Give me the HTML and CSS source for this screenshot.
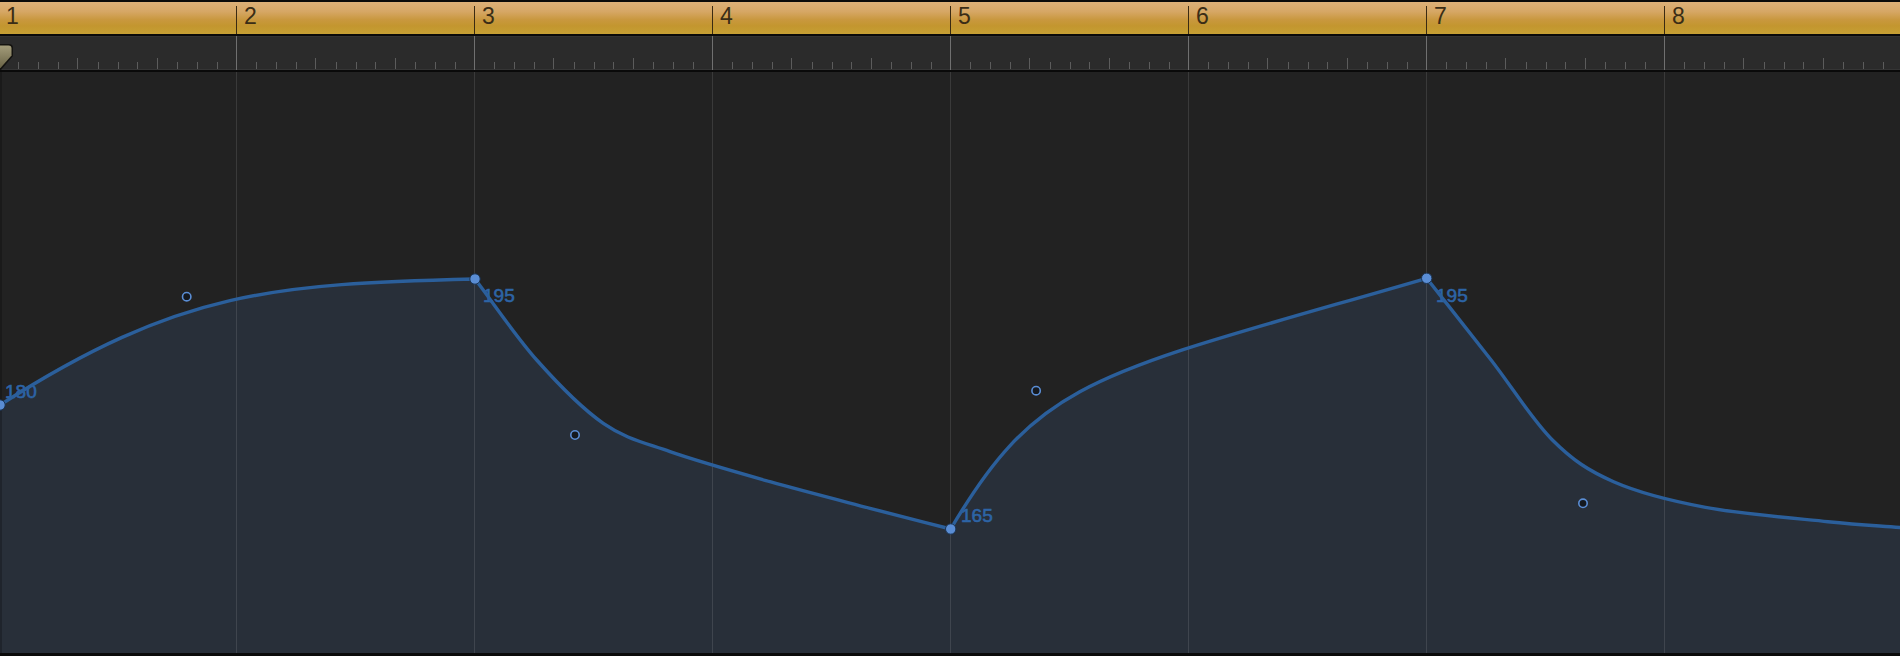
FILE: index.html
```html
<!DOCTYPE html>
<html>
<head>
<meta charset="utf-8">
<link rel="stylesheet" href="styles.css">
</head>
<body>
<div class="timeline">
  <div class="bars">
    <div class="bar">1</div>
    <div class="bar">2</div>
    <div class="bar">3</div>
    <div class="bar">4</div>
    <div class="bar">5</div>
    <div class="bar">6</div>
    <div class="bar">7</div>
    <div class="bar">8</div>
    <div class="bar"></div>
  </div>
  <div class="ruler">
    <svg class="ruler-svg" width="1900" height="34" viewBox="0 0 1900 34">
      <defs>
        <pattern id="ticks" x="-2" y="0" width="238" height="34" patternUnits="userSpaceOnUse">
          <rect x="0" y="0" width="1" height="34" fill="#707070"/>
          <rect x="20" y="26" width="1" height="7" fill="#5c5c5c"/>
          <rect x="40" y="26" width="1" height="7" fill="#5c5c5c"/>
          <rect x="60" y="26" width="1" height="7" fill="#5c5c5c"/>
          <rect x="79" y="22" width="1" height="11" fill="#5c5c5c"/>
          <rect x="100" y="26" width="1" height="7" fill="#5c5c5c"/>
          <rect x="120" y="26" width="1" height="7" fill="#5c5c5c"/>
          <rect x="139" y="26" width="1" height="7" fill="#5c5c5c"/>
          <rect x="159" y="22" width="1" height="11" fill="#5c5c5c"/>
          <rect x="179" y="26" width="1" height="7" fill="#5c5c5c"/>
          <rect x="199" y="26" width="1" height="7" fill="#5c5c5c"/>
          <rect x="219" y="26" width="1" height="7" fill="#5c5c5c"/>
        </pattern>
        <linearGradient id="mk" x1="0" y1="0" x2="0" y2="1">
          <stop offset="0" stop-color="#a39c7a"/>
          <stop offset="1" stop-color="#6a6446"/>
        </linearGradient>
      </defs>
      <rect x="0" y="0" width="1900" height="1" fill="#333333"/>
      <rect x="0" y="33" width="1900" height="1" fill="#353535"/>
      <rect x="0" y="0" width="1900" height="34" fill="url(#ticks)"/>
      <path d="M-2,8 H9 Q13,8 13,12 V20 L1,34 H-2 Z" fill="#141310"/>
      <path d="M-2,9.5 H8.5 Q11.5,9.5 11.5,12.5 V19.5 L0.5,32 H-2 Z" fill="url(#mk)"/>
    </svg>
  </div>
  <div class="lane">
    <svg class="lane-svg" width="1900" height="581" viewBox="0 72 1900 581">
      <path class="area" d="M0,405 C180,289.8 275,284 475,279 C495.6,306 515.3,335.95 536.7,360 C558.1,384.05 581.1,408 603.3,423.3 C625.5,438.6 642.2,441.97 670,451.7 C697.8,461.4 736.7,472.3 770,481.7 C803.3,491.1 839.9,500.4 870,508.3 C900.1,516.2 923.8,522.1 950.7,529 C1040.7,376 1096.7,374 1426.7,278.3 C1448.2,305.5 1470.15,333.05 1491.1,360 C1512.05,386.95 1532,419.7 1552.4,440 C1572.8,460.3 1588.1,470.5 1613.6,481.7 C1639.1,492.9 1669.8,500.6 1705.5,507.3 C1741.2,514 1795.1,518.3 1828,521.7 C1860.9,525.1 1877.8,525.7 1902.7,527.7 L1902.7,660 L0,660 Z"/>
      <rect x="0" y="72" width="2" height="581" fill="#000" opacity="0.22"/>
      <g class="gridlines">
        <rect x="236" y="72" width="1" height="581"/>
        <rect x="474" y="72" width="1" height="581"/>
        <rect x="712" y="72" width="1" height="581"/>
        <rect x="950" y="72" width="1" height="581"/>
        <rect x="1188" y="72" width="1" height="581"/>
        <rect x="1426" y="72" width="1" height="581"/>
        <rect x="1664" y="72" width="1" height="581"/>
      </g>
      <g class="labels">
        <text x="5" y="398">180</text>
        <text x="483" y="302">195</text>
        <text x="961" y="522">165</text>
        <text x="1436" y="302">195</text>
      </g>
      <path class="curve" d="M0,405 C180,289.8 275,284 475,279 C495.6,306 515.3,335.95 536.7,360 C558.1,384.05 581.1,408 603.3,423.3 C625.5,438.6 642.2,441.97 670,451.7 C697.8,461.4 736.7,472.3 770,481.7 C803.3,491.1 839.9,500.4 870,508.3 C900.1,516.2 923.8,522.1 950.7,529 C1040.7,376 1096.7,374 1426.7,278.3 C1448.2,305.5 1470.15,333.05 1491.1,360 C1512.05,386.95 1532,419.7 1552.4,440 C1572.8,460.3 1588.1,470.5 1613.6,481.7 C1639.1,492.9 1669.8,500.6 1705.5,507.3 C1741.2,514 1795.1,518.3 1828,521.7 C1860.9,525.1 1877.8,525.7 1902.7,527.7"/>
      <g class="handles">
        <circle cx="186.7" cy="296.7" r="4.2"/>
        <circle cx="575" cy="435" r="4.2"/>
        <circle cx="1036.1" cy="390.7" r="4.2"/>
        <circle cx="1583" cy="503.3" r="4.2"/>
      </g>
      <g class="points">
        <circle cx="0" cy="405" r="5.2"/>
        <circle cx="475" cy="279" r="5.2"/>
        <circle cx="950.7" cy="529" r="5.2"/>
        <circle cx="1426.7" cy="278.3" r="5.2"/>
      </g>
    </svg>
  </div>
</div>
</body>
</html>
```
FILE: styles.css
```css
html, body {
  margin: 0;
  padding: 0;
  background: #000;
}
body {
  width: 1900px;
  height: 656px;
  overflow: hidden;
  font-family: "Liberation Sans", Arial, sans-serif;
}
.timeline {
  display: flex;
  flex-direction: column;
  width: 1900px;
  height: 656px;
  overflow: hidden;
}
.bars {
  display: flex;
  height: 32px;
  margin-left: -2px;
  border-top: 2px solid #0a0a0a;
  border-bottom: 2px solid #0a0a0a;
  background: linear-gradient(to bottom, #dcb078 0%, #d6a765 30%, #c9983f 55%, #c3962f 75%, #c6a034 100%);
  flex: 0 0 auto;
}
.bar {
  flex: 0 0 238px;
  box-sizing: border-box;
  margin-top: 4px;
  height: 28px;
  border-left: 1px solid #3a2a12;
  padding-left: 7px;
  font-size: 23px;
  line-height: 20px;
  color: #3a2d16;
}
.ruler {
  height: 34px;
  background: #2b2b2b;
  border-bottom: 2px solid #0a0a0a;
  flex: 0 0 auto;
}
.ruler-svg {
  display: block;
}
.lane {
  height: 581px;
  background: #222222;
  border-bottom: 3px solid #0a0a0a;
  flex: 0 0 auto;
}
.lane-svg {
  display: block;
}
.area {
  fill: #282f39;
}
.gridlines rect {
  fill: #ffffff;
  opacity: 0.11;
}
.labels text {
  font-family: "Liberation Sans", Arial, sans-serif;
  font-size: 19px;
  fill: #2d64a6;
  stroke: #2d64a6;
  stroke-width: 0.6px;
}
.curve {
  fill: none;
  stroke: #2b5f9b;
  stroke-width: 3.4px;
  stroke-linecap: round;
  stroke-linejoin: round;
}
.handles circle {
  fill: #15191f;
  stroke: #5a8dd4;
  stroke-width: 1.6px;
}
.points circle {
  fill: #5a8dd4;
  stroke: #1a3352;
  stroke-width: 1px;
}
```
